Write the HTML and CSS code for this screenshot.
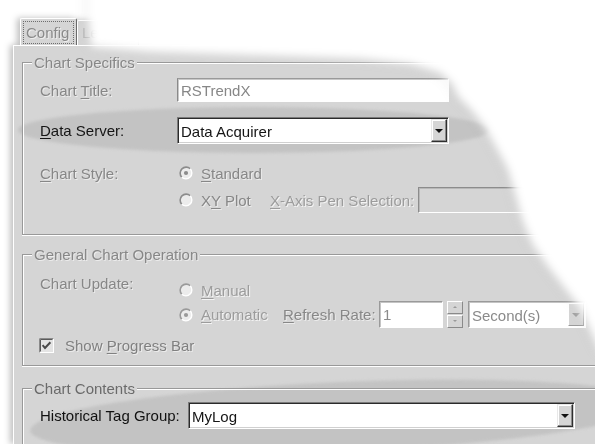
FILE: index.html
```html
<!DOCTYPE html>
<html lang="en">
<head>
<meta charset="utf-8">
<title>Chart Properties</title>
<link rel="stylesheet" href="styles.css">
</head>
<body>
<div class="dialog">
  <div class="tabs">
    <div class="tab tab-active"><span class="focus">Config</span></div>
    <div class="tab tab-next">Legend</div>
  </div>

  <div class="page">
    <div class="glow glow-server"></div>
    <div class="glow glow-tags"></div>

    <!-- Chart Specifics -->
    <div class="group group-specifics">
      <span class="caption dim">Chart Specifics</span>

      <div class="row row-title">
        <span class="label dim">Chart <u>T</u>itle:</span>
        <div class="edit edit-off edit-title">RSTrendX</div>
      </div>

      <div class="row row-server">
        <span class="label"><u>D</u>ata Server:</span>
        <div class="combo combo-server"><span class="combo-text">Data Acquirer</span><span class="drop-btn"></span></div>
      </div>

      <div class="row row-style">
        <span class="label dim"><u>C</u>hart Style:</span>
        <span class="opt">
          <svg class="radio" viewBox="0 0 14 14" aria-hidden="true"><circle cx="7" cy="7" r="6" fill="#ececec"/><path d="M2.76 11.24A6 6 0 0 1 11.24 2.76" fill="none" stroke="#8c8c8c" stroke-width="1.6"/><path d="M11.24 2.76A6 6 0 0 1 2.76 11.24" fill="none" stroke="#fff" stroke-width="1.4"/><circle cx="7" cy="7" r="2.1" fill="#8c8c8c"/></svg>
          <span class="opt-text dim"><u>S</u>tandard</span>
        </span>
      </div>

      <div class="row row-xy">
        <span class="label"></span>
        <span class="opt opt-xy">
          <svg class="radio" viewBox="0 0 14 14" aria-hidden="true"><circle cx="7" cy="7" r="6" fill="#ececec"/><path d="M2.76 11.24A6 6 0 0 1 11.24 2.76" fill="none" stroke="#8c8c8c" stroke-width="1.6"/><path d="M11.24 2.76A6 6 0 0 1 2.76 11.24" fill="none" stroke="#fff" stroke-width="1.4"/></svg>
          <span class="opt-text dim">X<u>Y</u> Plot</span>
        </span>
        <span class="pen-label faint"><u>X</u>-Axis Pen Selection:</span>
        <div class="edit edit-pen"></div>
      </div>
    </div>

    <!-- General Chart Operation -->
    <div class="group group-operation">
      <span class="caption dim">General Chart Operation</span>

      <div class="row row-manual">
        <span class="label label-update dim">Chart Update:</span>
        <span class="opt">
          <svg class="radio" viewBox="0 0 14 14" aria-hidden="true"><circle cx="7" cy="7" r="6" fill="#ececec"/><path d="M2.76 11.24A6 6 0 0 1 11.24 2.76" fill="none" stroke="#9a9a9a" stroke-width="1.6"/><path d="M11.24 2.76A6 6 0 0 1 2.76 11.24" fill="none" stroke="#fff" stroke-width="1.4"/></svg>
          <span class="opt-text faint"><u>M</u>anual</span>
        </span>
      </div>

      <div class="row row-auto">
        <span class="label"></span>
        <span class="opt opt-auto">
          <svg class="radio" viewBox="0 0 14 14" aria-hidden="true"><circle cx="7" cy="7" r="6" fill="#ececec"/><path d="M2.76 11.24A6 6 0 0 1 11.24 2.76" fill="none" stroke="#9a9a9a" stroke-width="1.6"/><path d="M11.24 2.76A6 6 0 0 1 2.76 11.24" fill="none" stroke="#fff" stroke-width="1.4"/><circle cx="7" cy="7" r="2.1" fill="#9a9a9a"/></svg>
          <span class="opt-text faint"><u>A</u>utomatic</span>
        </span>
        <span class="rate-label dim"><u>R</u>efresh Rate:</span>
        <div class="edit edit-rate">1</div>
        <div class="spin">
          <span class="spin-btn spin-up"></span>
          <span class="spin-btn spin-down"></span>
        </div>
        <div class="combo combo-unit"><span class="combo-text dim-text">Second(s)</span><span class="drop-btn drop-btn-off"></span></div>
      </div>

      <div class="row row-progress">
        <svg class="check" viewBox="0 0 15 15" aria-hidden="true"><rect x="0" y="0" width="15" height="15" fill="#fff"/><rect x="1" y="1" width="13" height="13" fill="#e4e4e4"/><path d="M0.5 14.5V0.5H14.5" fill="none" stroke="#8a8a8a"/><path d="M1.5 13.5V1.5H13.5" fill="none" stroke="#5a5a5a"/><path d="M3.6 7.2l2.4 2.7L11.4 4.2" fill="none" stroke="#4a4a4a" stroke-width="2"/></svg>
        <span class="check-text dim">Show <u>P</u>rogress Bar</span>
      </div>
    </div>

    <!-- Chart Contents -->
    <div class="group group-contents">
      <span class="caption caption-strong">Chart Contents</span>
      <div class="row row-tags">
        <span class="label label-tags">Historical Tag Group:</span>
        <div class="combo combo-tags"><span class="combo-text">MyLog</span><span class="drop-btn"></span></div>
      </div>
    </div>
  </div>
</div>

<!-- torn paper edge over the page -->
<svg class="tear" width="595" height="444" viewBox="0 0 595 444" aria-hidden="true">
  <defs>
    <filter id="soft" x="-20%" y="-20%" width="140%" height="140%"><feGaussianBlur stdDeviation="4"/></filter>
    <filter id="softer" x="-20%" y="-20%" width="140%" height="140%"><feGaussianBlur stdDeviation="6"/></filter>
  </defs>
  <path class="tear-shade" transform="translate(-3 1)" filter="url(#softer)"
        d="M88,-20 L88,18 L91,47 L150,52 L270,56 L360,59 L410,64 L440,73 L452,84 L458,97 L470,109 L484,126 L495,146 L507,168 L515,194 L522,220 L532,244 L548,267 L565,289 L580,308 L590,330 L600,352 L640,370 L640,-20 Z"/>
  <path class="tear-white" filter="url(#soft)"
        d="M88,-20 L88,18 L91,47 L150,52 L270,56 L360,59 L410,64 L440,73 L452,84 L458,97 L470,109 L484,126 L495,146 L507,168 L515,194 L522,220 L532,244 L548,267 L565,289 L580,308 L590,330 L600,352 L640,370 L640,-20 Z"/>
</svg>
</body>
</html>
```

FILE: styles.css
```css
* { box-sizing: border-box; }

html, body { margin: 0; }

body {
  position: relative;
  width: 595px;
  height: 444px;
  overflow: hidden;
  background: #fff;
  font-family: "Liberation Sans", Arial, sans-serif;
  font-size: 15px;
  line-height: 17px;
  color: #151515;
}

u { text-decoration: underline; text-underline-offset: 2px; }

/* ---------- dialog frame ---------- */
.dialog {
  width: 595px;
  height: 444px;
  padding: 18px 0 0 13px;
  filter: drop-shadow(-3px 0 3px rgba(0, 0, 0, 0.25));
}

.tabs {
  display: flex;
  align-items: flex-end;
  height: 27px;
  padding-left: 7px;
  overflow: hidden;
}

.tab {
  height: 25px;
  padding: 0 6px;
  background: #d5d5d5;
  border-top: 1px solid #fff;
  border-left: 1px solid #fff;
  border-right: 1px solid #6a6a6a;
  border-radius: 2px 2px 0 0;
  color: #8a8a8a;
  line-height: 23px;
}

.tab-next { padding-left: 4px; color: #b4b4b4; }

.tab-active {
  position: relative;
  z-index: 2;
  width: 57px;
  height: 28px;
  margin-bottom: -1px;
  padding: 2px 2px 0 2px;
}

.focus {
  display: block;
  height: 23px;
  padding-left: 2px;
  border: 1px dotted #6e6e6e;
  line-height: 21px;
  text-shadow: 1px 1px 0 rgba(255, 255, 255, 0.6);
}

.page {
  position: relative;
  height: 399px;
  padding: 8px 0 0 8px;
  overflow: hidden;
  background: #d5d5d5;
  border-top: 1px solid #fff;
  border-left: 1px solid #fff;
}

/* soft grey highlight bands behind the key rows */
.glow {
  position: absolute;
  z-index: 0;
  border-radius: 50%;
  background: #c3c3c3;
  filter: blur(1.5px);
}

.glow-server {
  left: 4px;
  top: 61px;
  width: 472px;
  height: 46px;
}

.glow-tags {
  left: 16px;
  top: 336px;
  width: 620px;
  height: 70px;
  transform: rotate(-2.5deg);
}

/* ---------- group boxes ---------- */
.group {
  position: relative;
  z-index: 1;
  padding-left: 17px;
  border: 1px solid #999;
  border-right: 0;
  box-shadow: inset 1px 1px 0 #fff, 0 1px 0 #fff;
}

.caption {
  position: absolute;
  top: -9px;
  left: 9px;
  padding: 0 2px;
  background: #d5d5d5;
  line-height: 17px;
}

.caption-strong { color: #6a6a6a; }

.group-specifics { margin-top: 8px; padding-top: 15px; padding-bottom: 21px; }
.group-operation { margin-top: 19px; padding-top: 25px; padding-bottom: 10px; }
.group-contents  { margin-top: 22px; padding-top: 13px; height: 56px; border-bottom: 0; }

/* ---------- rows ---------- */
.row {
  display: flex;
  align-items: center;
}

.row-title    { height: 24px; }
.row-server   { height: 27px; margin-top: 15px; }
.row-style    { height: 20px; margin-top: 19px; }
.row-xy       { height: 26px; margin-top: 4px; }
.row-manual   { height: 20px; }
.row-auto     { height: 27px; margin-top: 1px; }
.row-progress { height: 20px; margin-top: 7px; }
.row-tags     { height: 27px; }

.label {
  flex: none;
  width: 137px;
  white-space: nowrap;
}

.label-update { align-self: flex-start; margin-top: -5px; }
.label-tags   { width: 148px; color: #111; }

.dim {
  color: #878787;
  text-shadow: 1px 1px 0 rgba(255, 255, 255, 0.55);
}

.faint {
  color: #9c9c9c;
  text-shadow: 1px 1px 0 #f4f4f4;
}

/* ---------- option buttons ---------- */
.opt {
  display: flex;
  align-items: center;
  flex: none;
  margin-left: 2px;
}

.opt-xy   { width: 91px; }
.opt-auto { width: 104px; }

.radio { width: 14px; height: 14px; flex: none; }

.opt-text { margin-left: 8px; white-space: nowrap; }

.pen-label  { flex: none; width: 148px; white-space: nowrap; }
.rate-label { flex: none; width: 96px; white-space: nowrap; }

/* ---------- edit boxes ---------- */
.edit {
  flex: none;
  display: flex;
  align-items: center;
  padding: 0 3px;
  background: #fff;
  border: 1px solid;
  border-color: #7c7c7c #fff #fff #7c7c7c;
  box-shadow: inset 1px 1px 0 #404040, inset -1px -1px 0 #d5d5d5;
  white-space: nowrap;
}

.edit-off {
  border-color: #9a9a9a #fff #fff #8a8a8a;
  box-shadow: inset 1px 1px 0 #c8c8c8;
  color: #878787;
}

.edit-title { width: 272px; height: 24px; }

.edit-pen {
  width: 120px;
  height: 26px;
  background: #d5d5d5;
  border-color: #8c8c8c #fff #fff #8c8c8c;
  box-shadow: inset 1px 1px 0 #b8b8b8;
}

.edit-rate {
  width: 64px;
  height: 27px;
  color: #8a8a8a;
  border-color: #9a9a9a #fff #fff #9a9a9a;
  box-shadow: inset 1px 1px 0 #c4c4c4;
}

/* ---------- spinner ---------- */
.spin {
  display: flex;
  flex-direction: column;
  gap: 1px;
  flex: none;
  width: 16px;
  height: 27px;
  margin-left: 4px;
}

.spin-btn {
  position: relative;
  height: 13px;
  background: #d5d5d5;
  border: 1px solid;
  border-color: #fff #8a8a8a #8a8a8a #fff;
}

.spin-btn::after {
  content: "";
  position: absolute;
  left: 5px;
  top: 4px;
  border-left: 2px solid transparent;
  border-right: 2px solid transparent;
}

.spin-up::after   { border-bottom: 2px solid #9a9a9a; }
.spin-down::after { border-top: 2px solid #9a9a9a; }

/* ---------- drop-down lists ---------- */
.combo {
  flex: none;
  display: flex;
  align-items: center;
  justify-content: space-between;
  height: 27px;
  background: #fff;
  border: 1px solid;
  border-color: #7a7a7a #fff #fff #7a7a7a;
  box-shadow: inset 1px 1px 0 #2a2a2a, inset -1px -1px 0 #d0d0d0;
  padding: 1px 1px 1px 3px;
}

.combo-server { width: 272px; }
.combo-tags   { width: 387px; }

.combo-unit {
  width: 118px;
  margin-left: 5px;
  border-color: #9a9a9a #fff #fff #9a9a9a;
  box-shadow: inset 1px 1px 0 #c4c4c4;
}

.combo-text { white-space: nowrap; padding-top: 1px; }
.dim-text   { color: #8a8a8a; }

.drop-btn {
  position: relative;
  flex: none;
  width: 16px;
  height: 23px;
  background: #d5d5d5;
  border: 1px solid;
  border-color: #e8e8e8 #2e2e2e #2e2e2e #e8e8e8;
  box-shadow: inset -1px -1px 0 #8a8a8a, inset 1px 1px 0 #fff;
}

.drop-btn::after {
  content: "";
  position: absolute;
  left: 3px;
  top: 9px;
  border-left: 4px solid transparent;
  border-right: 4px solid transparent;
  border-top: 4px solid #111;
}

.drop-btn-off { border-color: #fff #9a9a9a #9a9a9a #fff; box-shadow: none; }
.drop-btn-off::after { border-top-color: #a0a0a0; }

/* ---------- check box ---------- */
.check {
  flex: none;
  width: 15px;
  height: 15px;
  margin-left: -1px;
}

.check-text { margin-left: 11px; white-space: nowrap; color: #808080; }

/* ---------- torn edge ---------- */
.tear {
  position: absolute;
  left: 0;
  top: 0;
  z-index: 10;
  pointer-events: none;
}

.tear-shade { fill: #8a8a8a; opacity: 0.1; }
.tear-white { fill: #fff; }
```
